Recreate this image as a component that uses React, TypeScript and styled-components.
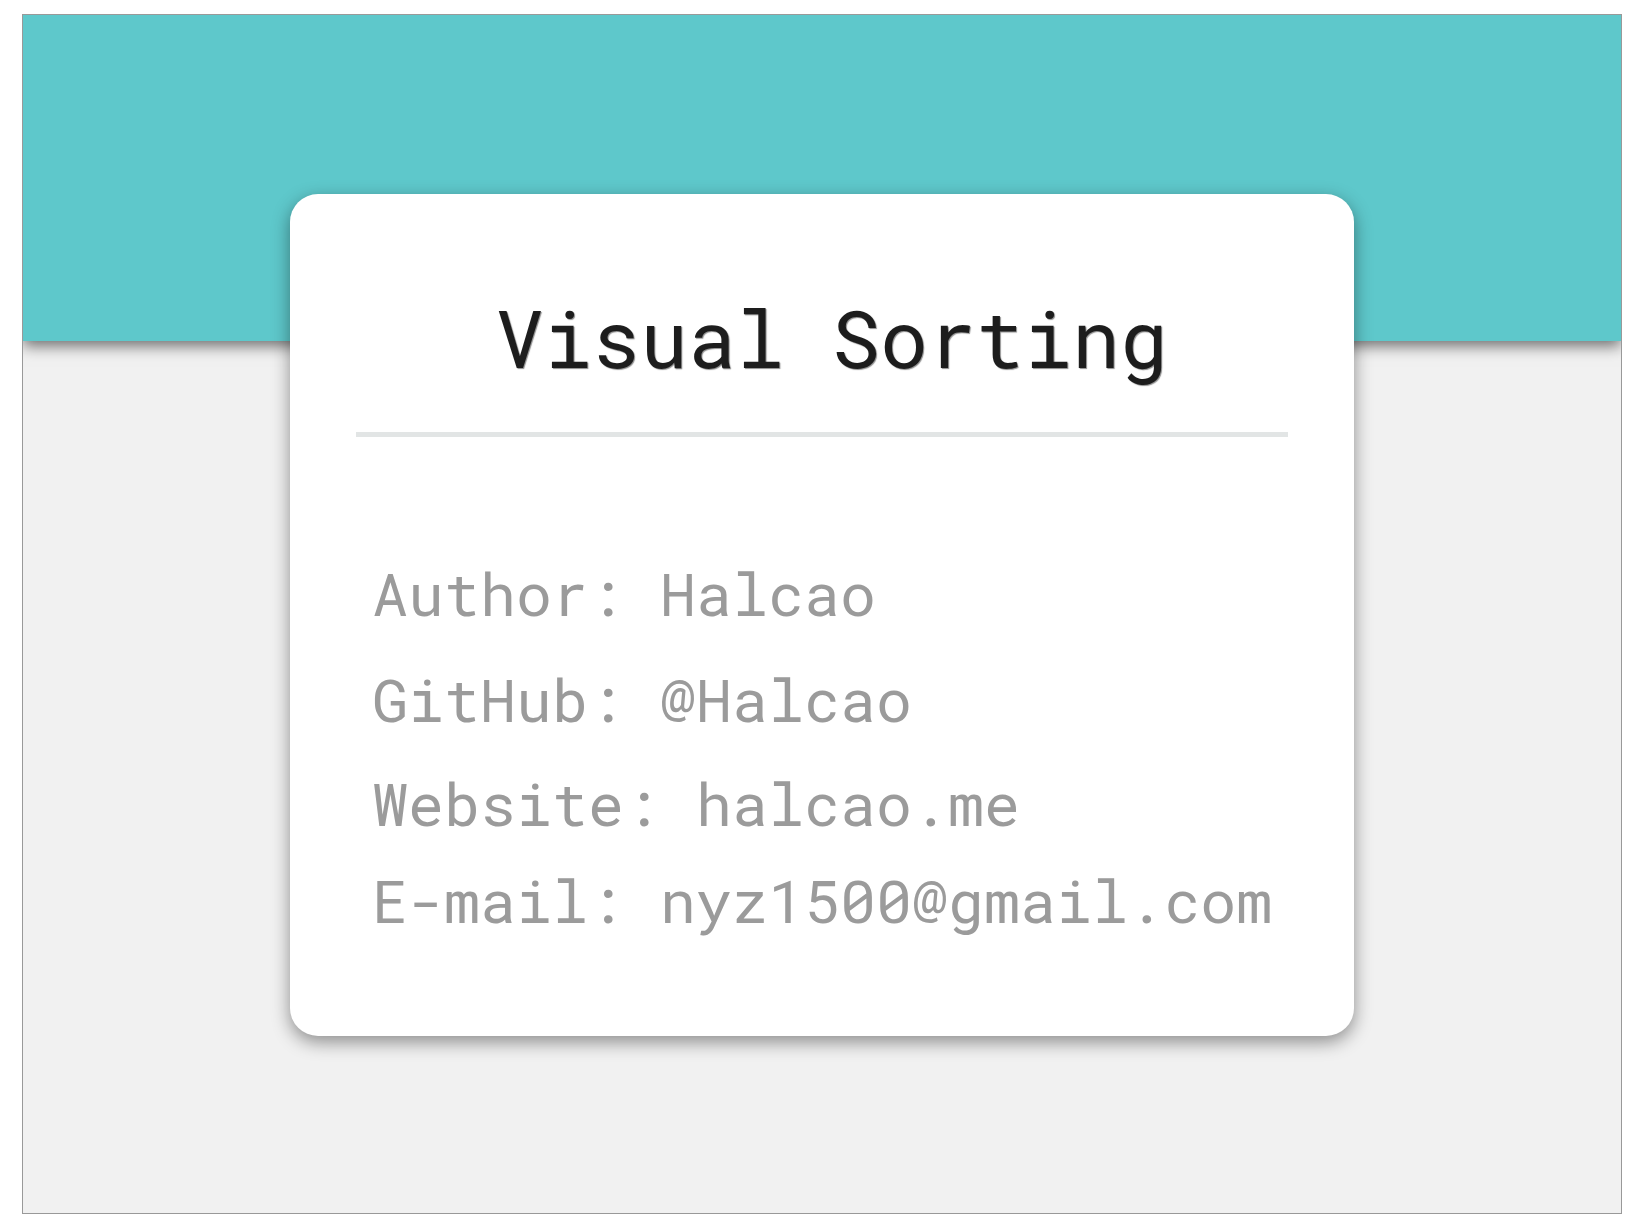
import styled, { createGlobalStyle } from "styled-components";

const GlobalStyle = createGlobalStyle`
  html, body {
    margin: 0;
    padding: 0;
    background: #fff;
  }
  body {
    font-family: "Roboto Mono", "Liberation Mono", "DejaVu Sans Mono", monospace;
  }
`;

const Page = styled.div`
  padding: 14px 0 0 22px;
`;

const Frame = styled.div`
  box-sizing: border-box;
  width: 1600px;
  height: 1200px;
  border: 1px solid #999;
  background: #f1f1f1;
  overflow: hidden;
  display: flex;
  flex-direction: column;
  align-items: center;
`;

const Header = styled.header`
  align-self: stretch;
  height: 326px;
  background: #5ec8cb;
  box-shadow: 0 5px 14px rgba(0, 0, 0, 0.55);
  flex-shrink: 0;
`;

const Card = styled.section`
  position: relative;
  box-sizing: border-box;
  width: 1064px;
  height: 842px;
  margin-top: -147px;
  background: #fff;
  border-radius: 28px;
  box-shadow: 0 6px 18px rgba(0, 0, 0, 0.42);
  padding-top: 95px;
  display: flex;
  flex-direction: column;
`;

const Title = styled.h1`
  margin: 0;
  padding-left: 20px;
  font-size: 80px;
  line-height: 96px;
  font-weight: 400;
  text-align: center;
  color: #1d1d1d;
  text-shadow: 1px 1px 1px rgba(0, 0, 0, 0.45);
`;

const Divider = styled.hr`
  margin: 47px 66px 0;
  height: 5px;
  border: none;
  background: #e2e5e5;
`;

const InfoList = styled.div`
  padding: 120px 0 0 82px;
  display: flex;
  flex-direction: column;
`;

const InfoLine = styled.p<{ $gap: number }>`
  margin: ${(p) => p.$gap}px 0 0;
  font-size: 60px;
  line-height: 72px;
  color: #9b9b9b;
  white-space: pre;
`;

const info = [
  { text: "Author: Halcao", gap: 0 },
  { text: "GitHub: @Halcao", gap: 34 },
  { text: "Website: halcao.me", gap: 32 },
  { text: "E-mail: nyz1500@gmail.com", gap: 25 },
];

const App = (): JSX.Element => {
  return (
    <>
      <GlobalStyle />
      <Page>
        <Frame>
          <Header />
          <Card>
            <Title>Visual Sorting</Title>
            <Divider />
            <InfoList>
              {info.map((line) => (
                <InfoLine key={line.text} $gap={line.gap}>
                  {line.text}
                </InfoLine>
              ))}
            </InfoList>
          </Card>
        </Frame>
      </Page>
    </>
  );
};

export default App;
